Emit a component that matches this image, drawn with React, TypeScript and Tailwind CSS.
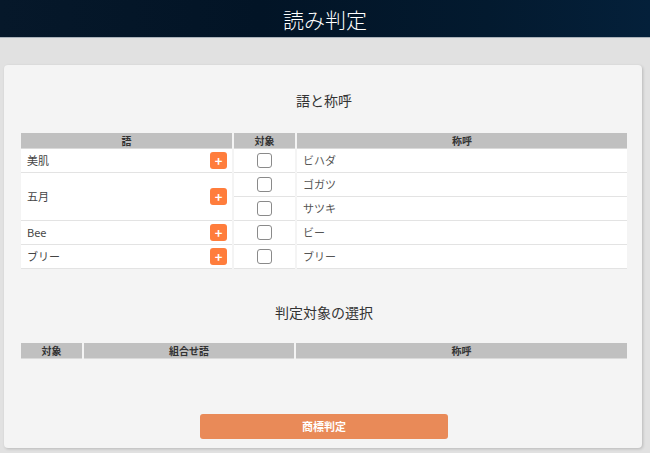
import React, { useState } from 'react';

type Reading = { id: string; text: string };
type Word = { id: string; word: string; readings: Reading[] };

const WORDS: Word[] = [
  { id: 'w1', word: '美肌', readings: [{ id: 'r1', text: 'ビハダ' }] },
  { id: 'w2', word: '五月', readings: [{ id: 'r2', text: 'ゴガツ' }, { id: 'r3', text: 'サツキ' }] },
  { id: 'w3', word: 'Bee', readings: [{ id: 'r4', text: 'ビー' }] },
  { id: 'w4', word: 'ブリー', readings: [{ id: 'r5', text: 'ブリー' }] },
];

const th = 'h-[16px] bg-[#c0c0c0] border-b border-[#dadada] p-0 text-[10px] leading-[15px] font-bold text-[#333]';
const td = 'h-[24px] bg-white border-b border-[#e3e3e3] p-0 text-[11px] leading-[23px] text-[#444]';

const Check: React.FC<{ checked: boolean; onChange: () => void }> = ({ checked, onChange }) => (
  <button
    onClick={onChange}
    className="mx-auto flex h-[15px] w-[15px] items-center justify-center rounded-[3px] border border-[#8a8a8a] bg-white"
  >
    {checked && (
      <svg viewBox="0 0 12 12" className="h-[11px] w-[11px]">
        <path d="M2 6.5l2.5 2.5L10 3" fill="none" stroke="#333" strokeWidth="1.6" />
      </svg>
    )}
  </button>
);

export default function App() {
  const [picked, setPicked] = useState<Record<string, boolean>>({});
  const toggle = (id: string) => setPicked(p => ({ ...p, [id]: !p[id] }));

  return (
    <div className="min-h-[453px] bg-[#e1e1e1] font-['Noto_Sans_CJK_JP','Noto_Sans',sans-serif] text-[#333]">
      <header className="flex h-[38px] items-center justify-center border-b border-[#aab2ba] bg-[linear-gradient(90deg,#06182a_0%,#021426_40%,#031a2f_75%,#04203a_100%)]">
        <h1 className="text-[21px] font-light leading-[28px] text-white">読み判定</h1>
      </header>

      <div className="ml-[4px] mt-[27px] w-[638px] rounded-[4px] bg-[#f4f4f4] pb-[9px] pl-[15px] pr-[13px] pt-[25px] shadow-[1px_1px_3px_rgba(0,0,0,0.18)]">
        <h2 className="mb-[23px] text-center text-[14px] leading-[20px] text-[#333]">語と称呼</h2>

        <table className="w-full table-fixed border-separate border-spacing-x-[2px] border-spacing-y-0">
          <thead>
            <tr>
              <th className={`${th} w-[211px]`}>語</th>
              <th className={`${th} w-[61px]`}>対象</th>
              <th className={th}>称呼</th>
            </tr>
          </thead>
          <tbody>
            {WORDS.map(w =>
              w.readings.map((r, i) => (
                <tr key={r.id}>
                  {i === 0 && (
                    <td rowSpan={w.readings.length} className={td}>
                      <div className="flex items-center justify-between pl-[6px] pr-[5px]">
                        <span>{w.word}</span>
                        <button className="flex h-[17px] w-[17px] items-center justify-center rounded-[3px] bg-[#ff7d3c] text-[13px] font-bold leading-none text-white">
                          +
                        </button>
                      </div>
                    </td>
                  )}
                  <td className={td}>
                    <Check checked={!!picked[r.id]} onChange={() => toggle(r.id)} />
                  </td>
                  <td className={`${td} pl-[6px] text-[#555]`}>{r.text}</td>
                </tr>
              ))
            )}
          </tbody>
        </table>

        <h2 className="mb-[21px] mt-[33px] text-center text-[14px] leading-[20px] text-[#333]">判定対象の選択</h2>

        <table className="w-full table-fixed border-separate border-spacing-x-[2px] border-spacing-y-0">
          <thead>
            <tr>
              <th className={`${th} w-[61px]`}>対象</th>
              <th className={`${th} w-[210px]`}>組合せ語</th>
              <th className={th}>称呼</th>
            </tr>
          </thead>
          <tbody />
        </table>

        <div className="mt-[55px] flex justify-center">
          <button className="h-[25px] w-[248px] rounded-[3px] bg-[#e98a58] text-[11px] font-bold text-white">
            商標判定
          </button>
        </div>
      </div>
    </div>
  );
}
